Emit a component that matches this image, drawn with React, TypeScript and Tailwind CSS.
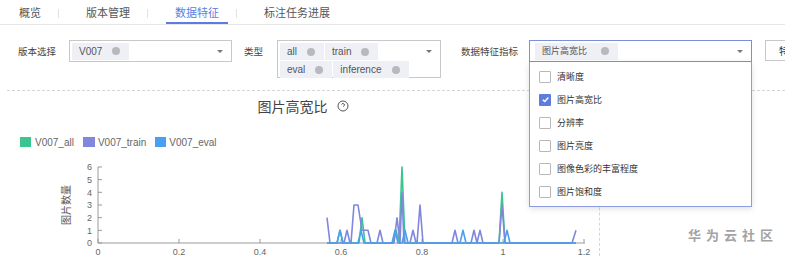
import React from "react";

type Pt = [number, number];

const FONT = "font-['Noto_Sans_CJK_SC','Noto_Sans',sans-serif]";
const LATIN = "font-['Liberation_Sans','Noto_Sans_CJK_SC',sans-serif]";

// chart geometry in page pixels
const X0 = 98;
const Y0 = 243;
const UNIT = 12.67;
const py = (v: number) => Y0 - v * UNIT;
const toPoints = (pts: Pt[]) => pts.map(([x, v]) => `${x},${py(v).toFixed(1)}`).join(" ");

const ALL: Pt[] = [
  [327, 0], [337, 0], [340, 1], [343, 0], [359, 0], [362, 2], [365, 0], [393, 0], [396, 1],
  [399, 0], [402, 6], [405, 0], [499, 0], [502, 4], [505, 0], [576, 0],
];

const TRAIN: Pt[] = [
  [327, 2], [330, 0], [344, 0], [347, 1], [350, 0], [351, 0], [354, 3], [358, 3], [362, 1],
  [368, 1], [371, 0], [377, 0], [380, 1], [383, 0], [394, 0], [397, 2], [400, 0], [402, 4],
  [404, 0], [410, 0], [413, 1], [416, 0], [417, 0], [420, 3], [423, 0], [452, 0], [455, 1],
  [458, 0], [471, 0], [474, 1], [477, 0], [480, 1], [483, 0], [499, 0], [502, 3], [505, 0],
  [572, 0], [576, 1],
];

const EVAL: Pt[] = [
  [327, 0], [337, 0], [340, 1], [343, 0], [358, 0], [361, 1], [364, 0], [392, 0], [395, 1],
  [398, 0], [402, 0], [405, 1], [408, 0], [460, 0], [463, 1], [466, 0], [504, 0], [507, 1],
  [510, 0], [576, 0],
];

const OPTIONS = ["清晰度", "图片高宽比", "分辨率", "图片亮度", "图像色彩的丰富程度", "图片饱和度"];

function Chip({ label, cjk }: { label: string; cjk?: boolean }) {
  return (
    <span
      className={`inline-flex h-[17px] shrink-0 items-center bg-[#eef0f5] pl-[7px] pr-[9px] text-[#555] ${
        cjk ? "text-[9px]" : `text-[10px] ${LATIN}`
      }`}
    >
      {label}
      <span className={`h-[8px] w-[8px] rounded-full bg-[#b9b9bd] ${cjk ? "ml-[14px]" : "ml-[10px]"}`} />
    </span>
  );
}

function Caret() {
  return (
    <span className="absolute right-[8px] top-[9px] h-0 w-0 border-x-[3px] border-t-[3px] border-x-transparent border-t-[#777]" />
  );
}

function Check({ on }: { on?: boolean }) {
  if (on) {
    return (
      <span className="flex h-[12px] w-[12px] items-center justify-center rounded-[1px] bg-[#5e7ce0]">
        <svg width="9" height="9" viewBox="0 0 10 10">
          <polyline points="2,5.2 4.2,7.3 8.2,2.8" fill="none" stroke="#fff" strokeWidth="1.6" />
        </svg>
      </span>
    );
  }
  return <span className="h-[12px] w-[12px] rounded-[1px] border border-[#b8b8b8] bg-white" />;
}

function Tabs() {
  const tabs = ["概览", "版本管理", "数据特征", "标注任务进展"];
  return (
    <div className="flex h-[25px] items-stretch border-b border-[#e6e6e6] pl-[10px]">
      {tabs.map((t, i) => (
        <React.Fragment key={t}>
          {i > 0 && <span className="ml-[8px] mr-[18px] mt-[9px] h-[9px] w-px bg-[#e2e2e2]" />}
          <div
            className={`relative flex items-center px-[9px] text-[11px] ${
              i === 2 ? "text-[#5e7ce0]" : "text-[#555]"
            }`}
          >
            {t}
            {i === 2 && <span className="absolute bottom-0 left-0 right-0 h-[2px] bg-[#5e7ce0]" />}
          </div>
        </React.Fragment>
      ))}
    </div>
  );
}

function Filters() {
  return (
    <div className="mt-[15px] flex items-start pl-[18px] text-[9.5px] text-[#444]">
      <div className="w-[51px] shrink-0 leading-[22px]">版本选择</div>
      <div className="relative flex h-[22px] w-[163px] shrink-0 items-center border border-[#c8c8c8] pl-[2px]">
        <Chip label="V007" />
        <Caret />
      </div>

      <div className="ml-[12px] w-[33px] shrink-0 leading-[22px]">类型</div>
      <div className="relative flex h-[38px] w-[164px] shrink-0 flex-wrap content-start gap-[1px] border border-[#c8c8c8] pl-[2px] pr-[26px] pt-[2px]">
        <Chip label="all" />
        <Chip label="train" />
        <Chip label="eval" />
        <Chip label="inference" />
        <Caret />
      </div>

      <div className="ml-[20px] w-[68px] shrink-0 leading-[22px]">数据特征指标</div>
      <div className="relative z-10 h-[22px] w-[223px] shrink-0">
        <div className="relative flex h-[22px] items-center border border-[#7b8fdb] pl-[5px]">
          <Chip label="图片高宽比" cjk />
          <Caret />
        </div>
        <div className="absolute left-0 top-[22px] w-[223px] border border-t-0 border-[#8b9ce0] bg-white pb-[3px] pt-[3px] shadow-[0_2px_6px_rgba(0,0,0,0.12)]">
          {OPTIONS.map((o, i) => (
            <div key={o} className="flex h-[23px] items-center gap-[6px] pl-[9px] text-[9px] text-[#333]">
              <Check on={i === 1} />
              {o}
            </div>
          ))}
        </div>
      </div>

      <div className="ml-[13px] flex h-[21px] w-[60px] shrink-0 items-center border border-[#c8c8c8] pl-[13px] text-[10px] text-[#333]">
        特征对比
      </div>
    </div>
  );
}

function Chart() {
  const yTicks = [0, 1, 2, 3, 4, 5, 6];
  const xTicks = ["0", "0.2", "0.4", "0.6", "0.8", "1", "1.2"];
  return (
    <svg width="593" height="108" viewBox="7 148 593 108" className={`block ${LATIN}`}>
      <line x1={X0} y1={py(6)} x2={X0} y2={Y0} stroke="#9a9a9a" strokeWidth="1" />
      <line x1={X0} y1={Y0} x2={585} y2={Y0} stroke="#9a9a9a" strokeWidth="1" />
      {yTicks.map((v) => (
        <g key={v}>
          <line x1={X0} y1={py(v)} x2={X0 + 4} y2={py(v)} stroke="#9a9a9a" />
          <text x={92} y={py(v) + 3.2} textAnchor="end" fontSize="9" fill="#666">
            {v}
          </text>
        </g>
      ))}
      {xTicks.map((t, i) => {
        const x = X0 + i * 81;
        return (
          <g key={t}>
            <line x1={x} y1={Y0} x2={x} y2={Y0 - 4} stroke="#9a9a9a" />
            <text x={x} y={255} textAnchor="middle" fontSize="9" fill="#666">
              {t}
            </text>
          </g>
        );
      })}
      <text
        x={67}
        y={205}
        textAnchor="middle"
        fontSize="10"
        fill="#555"
        transform="rotate(-90 67 205)"
        dominantBaseline="middle"
        className={FONT}
      >
        图片数量
      </text>
      <polyline points={toPoints(ALL)} fill="none" stroke="#3cc491" strokeWidth="1.6" strokeLinejoin="round" />
      <polyline points={toPoints(TRAIN)} fill="none" stroke="#8087dc" strokeWidth="1.6" strokeLinejoin="round" />
      <polyline points={toPoints(EVAL)} fill="none" stroke="#4a9ff0" strokeWidth="1.6" strokeLinejoin="round" />
    </svg>
  );
}

export default function App() {
  return (
    <div className={`relative h-[256px] w-[785px] overflow-hidden bg-white ${FONT}`}>
      <Tabs />
      <Filters />

      <div className="ml-[7px] mt-[12px] flex border-t border-dashed border-[#d6d6d6]">
        <div className="w-[593px] shrink-0 border-r border-dashed border-[#d6d6d6]">
          <div className="mt-[5px] flex items-center justify-center gap-[9px] text-[14px] leading-[20px] text-[#444]">
            图片高宽比
            <svg width="12" height="12" viewBox="0 0 24 24" fill="none" stroke="#555" strokeWidth="2">
              <circle cx="12" cy="12" r="10" />
              <path d="M9.09 9a3 3 0 0 1 5.83 1c0 2-3 3-3 3" />
              <path d="M12 17h.01" />
            </svg>
          </div>

          <div className={`mt-[20px] flex h-[12px] items-center pl-[13px] text-[10px] text-[#666] ${LATIN}`}>
            <span className="h-[10px] w-[11px] bg-[#3cc491]" />
            <span className="ml-[4px]">V007_all</span>
            <span className="ml-[9px] h-[10px] w-[12px] bg-[#8087dc]" />
            <span className="ml-[3px]">V007_train</span>
            <span className="ml-[9px] h-[10px] w-[11px] bg-[#4a9ff0]" />
            <span className="ml-[3px]">V007_eval</span>
          </div>

          <Chart />
        </div>
        <div className="flex-1" />
      </div>

      <div className="absolute left-[688px] top-[225px] text-[13px] font-bold tracking-[5px] text-[#a3a3a3]">
        华为云社区
      </div>
    </div>
  );
}
